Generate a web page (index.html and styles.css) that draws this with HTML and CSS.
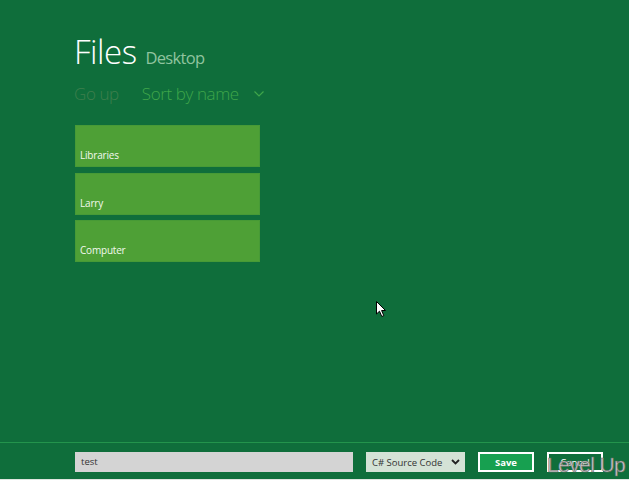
FILE: index.html
```html
<!DOCTYPE html>
<html>
<head>
<meta charset="utf-8">
<link rel="stylesheet" href="styles.css">
</head>
<body>
<div class="page">
  <main class="main">
    <header class="header">
      <h1 class="title">Files</h1>
      <span class="location">Desktop</span>
    </header>
    <nav class="toolbar">
      <span class="go-up">Go up</span>
      <span class="sort">Sort by name</span>
      <svg class="sort-chevron" width="10" height="6" viewBox="0 0 10 6"><path d="M0.5 0.5 L5 5 L9.5 0.5" fill="none" stroke="#3fa64a" stroke-width="1.2"/></svg>
    </nav>
    <ul class="tiles">
      <li class="tile">Libraries</li>
      <li class="tile">Larry</li>
      <li class="tile">Computer</li>
    </ul>
  </main>
  <footer class="bottom">
    <div class="filename">test</div>
    <div class="filetype">
      <span>C# Source Code</span>
      <svg width="9" height="6" viewBox="0 0 9 6"><path d="M1 1 L4.5 4.5 L8 1" fill="none" stroke="#222" stroke-width="1.8"/></svg>
    </div>
    <button class="btn btn-save">Save</button>
    <button class="btn btn-cancel">Cancel</button>
  </footer>
  <svg class="cursor" width="12" height="18" viewBox="0 0 12 18"><path d="M0.5 0.5 L0.5 13 L3.5 10.2 L5.8 15.5 L7.8 14.6 L5.6 9.5 L9.5 9.5 Z" fill="#fff" stroke="#000" stroke-width="1"/></svg>
  <div class="watermark">Level Up</div>
</div>
</body>
</html>
```
FILE: styles.css
```css
html, body {
  margin: 0;
  padding: 0;
}
body {
  background: #0f6e3b;
  font-family: "Open Sans", "Noto Sans", sans-serif;
}
.page {
  position: relative;
  width: 629px;
  height: 480px;
  display: flex;
  flex-direction: column;
  overflow: hidden;
}
.main {
  flex: 1;
  padding-left: 74px;
}
.header {
  display: flex;
  align-items: baseline;
  gap: 9px;
  margin-top: 31px;
  height: 42px;
}
.title {
  margin: 0;
  font-weight: 300;
  font-size: 33px;
  line-height: 42px;
  color: #ffffff;
  letter-spacing: -0.5px;
}
.location {
  font-size: 16.5px;
  font-weight: 400;
  color: #8fc49f;
  letter-spacing: -0.7px;
}
.toolbar {
  display: flex;
  align-items: baseline;
  margin-top: 9px;
  height: 24px;
  font-size: 17px;
  font-weight: 300;
  letter-spacing: -0.4px;
}
.go-up {
  color: #3e7f4d;
}
.sort {
  margin-left: 23px;
  color: #3fa64a;
}
.sort-chevron {
  margin-left: 15px;
  align-self: center;
}
.tiles {
  list-style: none;
  margin: 19px 0 0 1px;
  padding: 0;
  display: flex;
  flex-direction: column;
  gap: 5.5px;
}
.tile {
  box-sizing: border-box;
  width: 185px;
  height: 42px;
  background: #4ea036;
  border: 1px solid #479a36;
  color: #f2f8ee;
  font-size: 10px;
  display: flex;
  align-items: flex-end;
  padding: 0 0 4px 4px;
  letter-spacing: -0.2px;
}
.bottom {
  box-sizing: border-box;
  height: 38px;
  border-top: 1px solid #23944c;
  border-bottom: 1px solid #dfe6e0;
  display: flex;
  align-items: flex-start;
  padding: 9px 0 0 75px;
  gap: 13px;
  font-size: 9.5px;
}
.filename {
  box-sizing: border-box;
  width: 278px;
  height: 20px;
  background: #d4d4d4;
  color: #333;
  padding: 0 6px;
  line-height: 20px;
}
.filetype {
  box-sizing: border-box;
  width: 99px;
  height: 20px;
  background: #d4e2d6;
  color: #333;
  padding: 0 5px 0 6px;
  display: flex;
  align-items: center;
  justify-content: space-between;
}
.btn {
  box-sizing: border-box;
  width: 56px;
  height: 20px;
  border: 2px solid #ffffff;
  color: #ffffff;
  font-family: inherit;
  font-size: 9.5px;
  font-weight: 700;
  padding: 0;
  margin: 0;
}
.btn-save {
  background: #17a050;
}
.btn-cancel {
  background: transparent;
  font-weight: 400;
}
.cursor {
  position: absolute;
  left: 376px;
  top: 301px;
}
.watermark {
  position: absolute;
  left: 547px;
  top: 453px;
  white-space: nowrap;
  font-family: "Liberation Sans", sans-serif;
  font-size: 21px;
  line-height: 24px;
  color: #c9c9c9;
  letter-spacing: -0.6px;
  -webkit-text-stroke: 0.6px #6a6a6a;
}
```
